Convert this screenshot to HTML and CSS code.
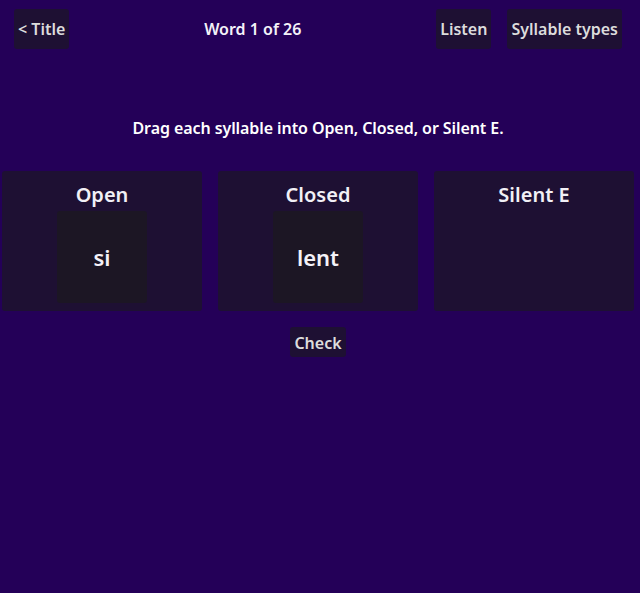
FILE: index.html
```html
<!DOCTYPE html>
<html lang="en">
<head>
    <meta charset="UTF-8">
    <meta name="viewport" content="width=device-width, initial-scale=1.0">
    <title>Syllable Sort</title>
    <link rel="stylesheet" href="styles.css">
</head>
<body>
    <div class="screen">
        <div class="topbar">
            <button class="btn">&lt; Title</button>
            <div class="progress">Word 1 of 26</div>
            <div class="actions">
                <button class="btn">Listen</button>
                <button class="btn">Syllable types</button>
            </div>
        </div>

        <p class="prompt">Drag each syllable into Open, Closed, or Silent E.</p>

        <div class="bins">
            <div class="bin">
                <div class="bin-title">Open</div>
                <div class="bin-slot">
                    <div class="tile">si</div>
                </div>
            </div>
            <div class="bin">
                <div class="bin-title">Closed</div>
                <div class="bin-slot">
                    <div class="tile">lent</div>
                </div>
            </div>
            <div class="bin">
                <div class="bin-title">Silent E</div>
                <div class="bin-slot"></div>
            </div>
        </div>

        <div class="footer">
            <button class="btn btn-small">Check</button>
        </div>
    </div>
</body>
</html>
```

FILE: styles.css
```css
body {
    margin: 0;
    padding: 0;
    background-color: #240058;
    font-family: "Noto Sans", "Open Sans", sans-serif;
    font-weight: 600;
    font-size: 16px;
    color: #ffffff;
}

.screen {
    width: 636px;
    height: 593px;
}

.topbar {
    display: flex;
    align-items: center;
    padding: 9px 14px 0 14px;
}

.progress {
    flex: 1;
    text-align: center;
    color: #f4f2f8;
}

.actions {
    display: flex;
    gap: 16px;
}

.btn {
    height: 40px;
    padding: 0 4px;
    border: none;
    border-radius: 3px;
    background-color: rgba(26, 26, 26, 0.6);
    color: #dcdcdc;
    font-family: inherit;
    font-weight: 600;
    font-size: 16px;
    cursor: pointer;
}

.btn-small {
    height: 30px;
    padding-top: 2px;
}

.prompt {
    margin: 67px 0 0 0;
    text-align: center;
    line-height: 24px;
    letter-spacing: -0.08px;
}

.bins {
    display: grid;
    grid-template-columns: repeat(3, 200px);
    gap: 16px;
    justify-content: center;
    margin-top: 31px;
}

.bin {
    height: 140px;
    box-sizing: border-box;
    padding: 10px 0 8px 0;
    border-radius: 3px;
    background-color: rgba(26, 26, 26, 0.6);
    display: flex;
    flex-direction: column;
    align-items: center;
}

.bin-title {
    font-size: 20px;
    line-height: 28px;
    color: #f2f0f6;
}

.bin-slot {
    margin-top: 2px;
    display: flex;
    justify-content: center;
}

.tile {
    width: 90px;
    height: 92px;
    border-radius: 3px;
    background-color: rgba(26, 26, 26, 0.6);
    display: flex;
    align-items: center;
    justify-content: center;
    font-size: 22px;
    color: #f4f2f8;
}

.footer {
    display: flex;
    justify-content: center;
    margin-top: 16px;
}
```
